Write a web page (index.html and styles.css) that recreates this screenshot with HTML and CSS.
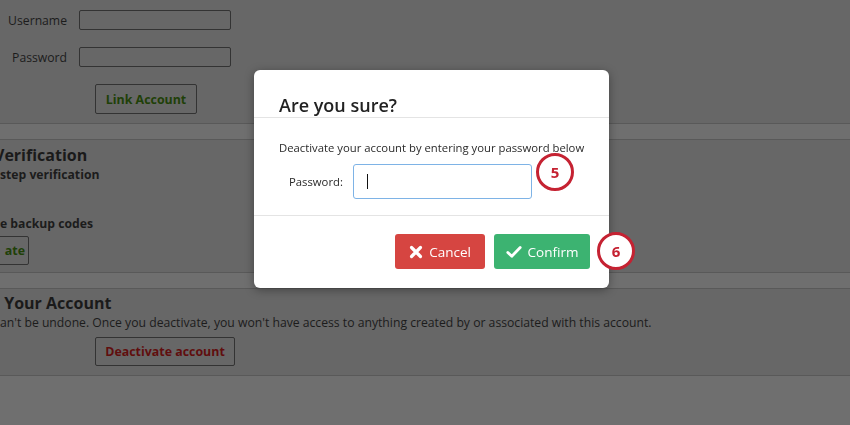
FILE: index.html
```html
<!DOCTYPE html>
<html>
<head>
<meta charset="utf-8">
<link rel="stylesheet" href="styles.css">
</head>
<body>
<div class="page">
  <section class="sec sec-link">
    <div class="form-row">
      <label class="lbl">Username</label>
      <div class="field"></div>
    </div>
    <div class="form-row">
      <label class="lbl">Password</label>
      <div class="field"></div>
    </div>
    <div class="btn-row">
      <button class="bg-btn green">Link Account</button>
    </div>
  </section>
  <div class="band"></div>
  <section class="sec sec-verify">
    <h2 class="sec-title cut">Verification</h2>
    <p class="strong">step verification</p>
    <p class="strong backup">e backup codes</p>
    <button class="bg-btn green gen">ate</button>
  </section>
  <div class="band"></div>
  <section class="sec sec-deact">
    <h2 class="sec-title">&nbsp;Your Account</h2>
    <p class="desc">an't be undone. Once you deactivate, you won't have access to anything created by or associated with this account.</p>
    <div class="btn-row">
      <button class="bg-btn red">Deactivate account</button>
    </div>
  </section>
</div>

<div class="overlay">
  <div class="modal">
    <div class="modal-head">Are you sure?</div>
    <div class="modal-body">
      <p class="intro">Deactivate your account by entering your password below</p>
      <div class="pw-row">
        <span class="pw-label">Password:</span>
        <div class="pw-input"><span class="caret"></span></div>
      </div>
    </div>
    <div class="modal-foot">
      <button class="mbtn cancel">
        <svg width="14" height="14" viewBox="0 0 14 14"><path d="M2.5 2.5 L11.5 11.5 M11.5 2.5 L2.5 11.5" stroke="#fff" stroke-width="3.2" stroke-linecap="round"/></svg>
        Cancel
      </button>
      <button class="mbtn confirm">
        <svg width="16" height="14" viewBox="0 0 16 14"><path d="M1.8 7.4 L5.8 11.2 L14.2 2.6" fill="none" stroke="#fff" stroke-width="2.8" stroke-linecap="round" stroke-linejoin="round"/></svg>
        Confirm
      </button>
    </div>
    <div class="badge b5">5</div>
    <div class="badge b6">6</div>
  </div>
</div>
</body>
</html>
```

FILE: styles.css
```css
* { box-sizing: border-box; }
html, body { margin: 0; padding: 0; }
body {
  width: 850px;
  height: 425px;
  overflow: hidden;
  background: #6f6f6f;
  font-family: "Open Sans", "Liberation Sans", sans-serif;
  color: #1d1d1d;
}
.page { display: flex; flex-direction: column; }
.sec { background: #676767; }
.band { height: 17px; background: #6f6f6f; border-top: 1px solid #595959; border-bottom: 1px solid #595959; }

.sec-link { height: 123px; padding-top: 10px; }
.form-row { display: flex; align-items: center; gap: 12px; height: 20px; margin-bottom: 17px; }
.lbl { width: 67px; text-align: right; font-size: 12.2px; color: #1c1c1c; }
.field { width: 152px; height: 20px; border: 1px solid #333; border-radius: 2px; }
.btn-row { padding-left: 95px; }
.bg-btn {
  display: block;
  font-family: "Open Sans", "Liberation Sans", sans-serif;
  font-size: 12.4px;
  font-weight: 700;
  background: transparent;
  border: 1px solid #333;
  border-radius: 2px;
  padding: 0;
  height: 29px;
}
.sec-link .bg-btn { width: 102px; margin-top: 1px; height: 30px; }
.green { color: #1f4008; }
.red { color: #600e0e; }

.sec-verify { height: 132px; padding-top: 4px; }
.sec-title { margin: 0; font-size: 16px; font-weight: 700; line-height: 22px; color: #1a1a1a; }
.cut { margin-left: -6px; }
.strong { margin: 0; font-size: 12.2px; font-weight: 700; line-height: 18px; color: #1c1c1c; }
.backup { margin-top: 31px; }
.gen { width: 56px; margin-left: -27px; margin-top: 3px; height: 29px; text-align: right; padding-right: 3px; }

.sec-deact { height: 87px; padding-top: 3px; border-bottom: 1px solid #595959; }
.desc { margin: 0; font-size: 12.2px; line-height: 18px; color: #1c1c1c; }
.sec-deact .btn-row { margin-top: 5px; }
.sec-deact .bg-btn { width: 140px; height: 29px; }

.overlay { position: fixed; inset: 0; }
.modal {
  position: absolute;
  left: 254px;
  top: 70px;
  width: 355px;
  height: 218px;
  background: #fff;
  border-radius: 6px;
  box-shadow: 0 2px 10px rgba(0,0,0,0.35);
  display: flex;
  flex-direction: column;
}
.modal-head {
  height: 48px;
  border-bottom: 1px solid #e4e4e4;
  padding: 23px 25px 0;
  font-size: 18px;
  font-weight: 600;
  line-height: 24px;
  color: #222;
}
.modal-body { height: 98px; border-bottom: 1px solid #e4e4e4; padding: 22px 0 0 25px; }
.intro { margin: 0; font-size: 11.3px; line-height: 16px; color: #2a2a2a; }
.pw-row { display: flex; align-items: center; margin-top: 8px; }
.pw-label { width: 74px; padding-left: 10px; font-size: 11.3px; color: #2a2a2a; }
.pw-input {
  width: 179px;
  height: 35px;
  border: 1px solid #7eb3e6;
  border-radius: 3px;
  display: flex;
  align-items: center;
  padding-left: 13px;
}
.caret { width: 1px; height: 15px; background: #111; }
.modal-foot { flex: 1; display: flex; justify-content: flex-end; align-items: flex-start; gap: 9px; padding: 18px 19px 0 0; }
.mbtn {
  height: 35px;
  border: none;
  border-radius: 3px;
  color: #fff;
  font-family: "Open Sans", "Liberation Sans", sans-serif;
  font-size: 13.5px;
  display: flex;
  align-items: center;
  justify-content: center;
  gap: 6px;
  padding: 0;
}
.cancel { width: 90px; background: #d64541; }
.confirm { width: 96px; background: #3cb371; }

.badge {
  position: absolute;
  width: 38px;
  height: 38px;
  border-radius: 50%;
  border: 3px solid #c52232;
  background: #fff;
  color: #c52232;
  font-size: 15px;
  font-weight: 700;
  display: flex;
  align-items: center;
  justify-content: center;
}
.b5 { left: 282px; top: 83px; }
.b6 { left: 343px; top: 162px; }
```
